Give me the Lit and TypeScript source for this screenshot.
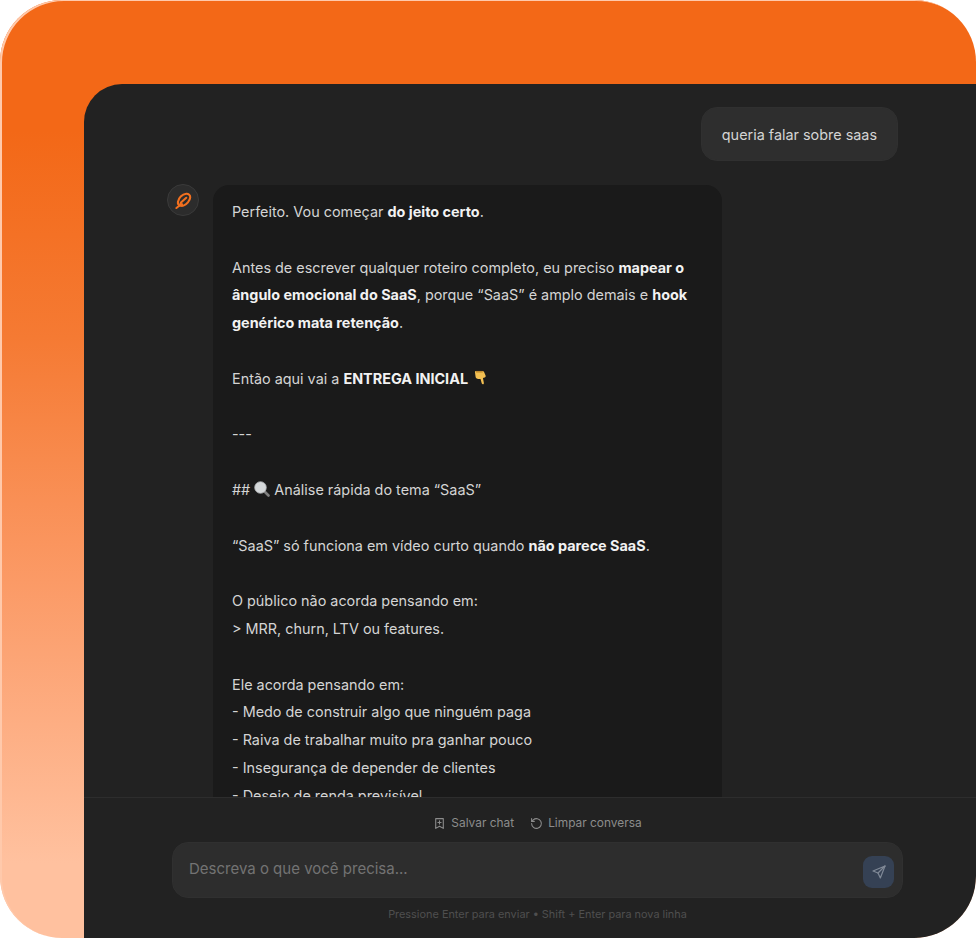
import { LitElement, html, css } from "lit";
import { customElement } from "lit/decorators.js";

const hand = html`<svg class="emoji" viewBox="0 0 16 16" aria-hidden="true"><path fill="#f2bf52" d="M3.200 1h6.900c.8 0 1.400.5 1.700 1.200l1.600 3.700c.4 1-.1 1.900-1 2.100l-1.800.4 1 5.400c.1.700-.3 1.300-.9 1.400s-1.200-.3-1.400-1L8 9.600 5.300 9.500C3.800 9.400 2.900 8.400 2.700 7L2.100 2.400C2 1.600 2.500 1 3.200 1z"/><path fill="#c08a2d" d="M3.200 1h7.200v1.700H3.200z"/></svg>`;
const glass = html`<svg class="emoji glass" viewBox="0 0 16 16" aria-hidden="true"><path d="M10 10l4.500 4.500" stroke="#7f7f7f" stroke-width="2.600" stroke-linecap="round"/><circle cx="6.500" cy="6.500" r="5.800" fill="#d5d8da"/><circle cx="6.500" cy="6.500" r="5.800" fill="none" stroke="#aeb1b4" stroke-width=".8"/></svg>`;

@customElement("app-root")
export class AppRoot extends LitElement {
  static styles = css`
    :host {
      display: block;
      width: 976px;
      height: 938px;
      font-family: Inter, "Liberation Sans", sans-serif;
      background: #fff;
    }
    .frame {
      box-sizing: border-box;
      width: 976px;
      height: 938px;
      padding: 84px 0 0 84px;
      border-radius: 62px;
      box-shadow: inset 2px 1px 0 #ffc9ab;
      background: linear-gradient(180deg, #f36817 0%, #f36817 14%, #f57a33 36%, #fb9a66 62%, #ffc19f 92%, #ffc19f 100%);
      overflow: hidden;
      display: flex;
    }
    .panel {
      flex: 1;
      background: #222222;
      border-radius: 38px 0 60px 0;
      display: flex;
      flex-direction: column;
      overflow: hidden;
      min-width: 0;
    }
    .messages {
      flex: 1;
      min-height: 0;
      overflow: hidden;
      box-sizing: border-box;
      padding: 23px 78px 0 83px;
      display: flex;
      flex-direction: column;
      gap: 24px;
    }
    .user-row {
      display: flex;
      justify-content: flex-end;
    }
    .user {
      box-sizing: border-box;
      height: 54px;
      padding: 0 20px;
      display: flex;
      align-items: center;
      border-radius: 16px;
      background: #2e2e2e;
      color: #d4d4d4;
      font-size: 14.400px;
      border: 1px solid #303030;
    }
    .bot-row {
      display: flex;
      gap: 14px;
      align-items: flex-start;
    }
    .avatar {
      width: 32px;
      height: 32px;
      margin-top: -1px;
      flex: none;
      border-radius: 50%;
      background: #2c2c2c;
      border: 1px solid #3a3a3a;
      box-sizing: border-box;
      display: flex;
      align-items: center;
      justify-content: center;
    }
    .avatar svg {
      width: 19px;
      height: 19px;
    }
    .bubble {
      box-sizing: border-box;
      width: 509px;
      flex: none;
      background: #1a1a1a;
      border-radius: 16px;
      padding: 13px 19px 16px;
      color: #d4d4d4;
      font-size: 14.400px;
      line-height: 27.800px;
      white-space: pre-line;
    }
    .bubble b {
      color: #f2f2f2;
      font-weight: 700;
    }
    .emoji {
      width: 15px;
      height: 15px;
      vertical-align: -1px;
      margin-left: 1px;
    }
    .glass {
      width: 16px;
      height: 16px;
      vertical-align: -2px;
      margin: 0;
    }
    .footer {
      flex: none;
      height: 141px;
      box-sizing: border-box;
      border-top: 1px solid #2d2d2d;
      display: flex;
      flex-direction: column;
      align-items: center;
      padding: 17px 73px 0 88px;
    }
    .actions {
      display: flex;
      gap: 16px;
      color: #8c8c8c;
      font-size: 11.900px;
      line-height: 16px;
    }
    .action {
      display: flex;
      align-items: center;
      gap: 5px;
    }
    .action svg {
      width: 13px;
      height: 13px;
      stroke: #8c8c8c;
      fill: none;
      stroke-width: 2;
      stroke-linecap: round;
      stroke-linejoin: round;
    }
    .input {
      box-sizing: border-box;
      width: 100%;
      height: 56px;
      margin-top: 11px;
      border-radius: 16px;
      background: #2d2d2d;
      border: 1px solid #303030;
      display: flex;
      align-items: center;
      justify-content: space-between;
      padding: 0 8px 0 16px;
    }
    .placeholder {
      color: #737373;
      font-size: 15px;
      margin-top: -3px;
    }
    .send {
      width: 31px;
      height: 32px;
      margin-top: 4px;
      border-radius: 9px;
      background: #354154;
      display: flex;
      align-items: center;
      justify-content: center;
    }
    .send svg {
      width: 16px;
      height: 16px;
      fill: none;
      stroke: #7f8896;
      stroke-width: 1.800;
      stroke-linejoin: round;
      stroke-linecap: round;
    }
    .hint {
      margin-top: 9px;
      font-size: 10.900px;
      line-height: 14px;
      color: #4f4f4f;
    }
  `;

  render() {
    return html`
      <div class="frame">
        <main class="panel">
          <section class="messages">
            <div class="user-row"><div class="user">queria falar sobre saas</div></div>
            <div class="bot-row">
              <div class="avatar">
                <svg viewBox="0 0 24 24" fill="none" stroke="#f2701f" stroke-width="2.600" stroke-linecap="round" stroke-linejoin="round">
                  <path d="M8 18.500c-2.200-.6-3.500-2.400-3-5C5.800 9 10 4 15.500 3.500c3-.2 5.200 1.800 5 4.500-.4 4.500-4.500 9-8.500 10.500-1.400.5-2.800.4-4 0z"/>
                  <path d="M15.500 8.500 8.800 14.500c-1.400 1.300-.2 3 1.500 2.200"/>
                  <path d="M7.500 18 3 21.500"/>
                </svg>
              </div>
              <div class="bubble">Perfeito. Vou começar <b>do jeito certo</b>.

Antes de escrever qualquer roteiro completo, eu preciso <b>mapear o ângulo emocional do SaaS</b>, porque “SaaS” é amplo demais e <b>hook genérico mata retenção</b>.

Então aqui vai a <b>ENTREGA INICIAL</b> ${hand}

---

## ${glass} Análise rápida do tema “SaaS”

“SaaS” só funciona em vídeo curto quando <b>não parece SaaS</b>.

O público não acorda pensando em:
&gt; MRR, churn, LTV ou features.

Ele acorda pensando em:
- Medo de construir algo que ninguém paga
- Raiva de trabalhar muito pra ganhar pouco
- Insegurança de depender de clientes
- Desejo de renda previsível</div>
            </div>
          </section>
          <footer class="footer">
            <div class="actions">
              <span class="action">
                <svg viewBox="0 0 24 24"><path d="M5 3h14v18l-7-4-7 4z"/><path d="M12 7v6M9 10h6"/></svg>
                Salvar chat
              </span>
              <span class="action">
                <svg viewBox="0 0 24 24"><path d="M3 12a9 9 0 1 0 3-6.700L3 8"/><path d="M3 3v5h5"/></svg>
                Limpar conversa
              </span>
            </div>
            <div class="input">
              <span class="placeholder">Descreva o que você precisa...</span>
              <span class="send">
                <svg viewBox="0 0 24 24"><path d="M21 3 3 10.500l7.500 3L14 21z"/><path d="M21 3 10.500 13.500"/></svg>
              </span>
            </div>
            <div class="hint">Pressione Enter para enviar • Shift + Enter para nova linha</div>
          </footer>
        </main>
      </div>
    `;
  }
}
